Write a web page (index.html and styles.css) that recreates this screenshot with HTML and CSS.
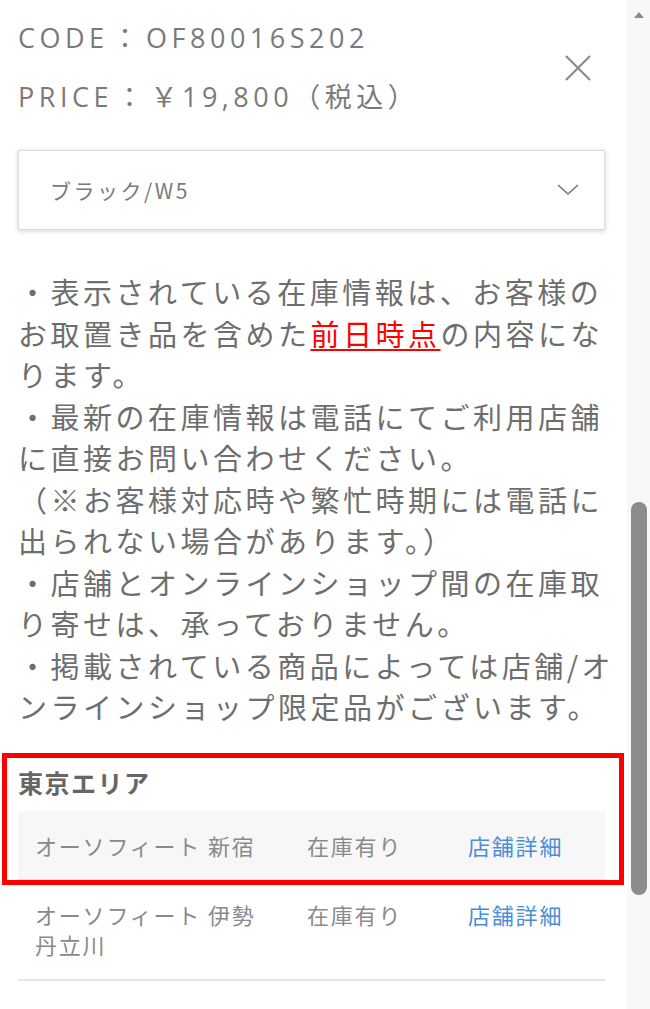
FILE: index.html
```html
<!DOCTYPE html>
<html lang="ja">
<head>
<meta charset="utf-8">
<link rel="stylesheet" href="styles.css">
</head>
<body>
<div class="window">
  <main class="content">
    <header class="head">
      <div class="meta">
        <p class="meta-line">CODE<span class="colon">：</span>OF80016S202</p>
        <p class="meta-line">PRICE<span class="colon">：</span>￥19,800（税込）</p>
      </div>
      <button class="close" aria-label="閉じる">
        <svg viewBox="0 0 26 26" width="26" height="26"><path d="M1 1L25 25M25 1L1 25" stroke="#8a8a8a" stroke-width="2.2" fill="none"/></svg>
      </button>
    </header>

    <div class="select">
      <span class="select-text">ブラック/W5</span>
      <svg class="chev" viewBox="0 0 22 12" width="22" height="12"><path d="M1 1L11 10L21 1" stroke="#777" stroke-width="1.6" fill="none"/></svg>
    </div>

    <div class="notes">
      <p>・表示されている在庫情報は、お客様のお取置き品を含めた<a class="red">前日時点</a>の内容になります。</p>
      <p>・最新の在庫情報は電話にてご利用店舗に直接お問い合わせください。</p>
      <p>（※お客様対応時や繁忙時期には電話に出られない場合があります。）</p>
      <p>・店舗とオンラインショップ間の在庫取り寄せは、承っておりません。</p>
      <p>・掲載されている商品によっては店舗/オンラインショップ限定品がございます。</p>
    </div>

    <section class="area">
      <div class="highlight">
        <h2 class="area-title">東京エリア</h2>
        <div class="row shaded">
          <span class="name">オーソフィート 新宿</span>
          <span class="stock">在庫有り</span>
          <a class="link">店舗詳細</a>
        </div>
      </div>
      <div class="row">
        <span class="name">オーソフィート 伊勢丹立川</span>
        <span class="stock">在庫有り</span>
        <a class="link">店舗詳細</a>
      </div>
    </section>
  </main>
  <aside class="scrollbar">
    <span class="arrow"></span>
    <span class="thumb"></span>
  </aside>
</div>
</body>
</html>
```

FILE: styles.css
```css
* { box-sizing: border-box; }
html, body { margin: 0; padding: 0; background: #fff; }
body {
  font-family: "Noto Sans CJK JP", "Noto Sans", sans-serif;
  color: #6e6e6e;
  height: 1009px;
  overflow: hidden;
}
.window {
  display: flex;
  height: 1009px;
}
.content {
  width: 627px;
  padding: 8px 22px 0 18px;
}
.head {
  display: flex;
  justify-content: space-between;
  align-items: center;
}
.meta-line {
  margin: 0;
  font-family: "Open Sans", "Noto Sans CJK JP", sans-serif;
  font-size: 27px;
  line-height: 59px;
  letter-spacing: 4.5px;
  color: #7a7a7a;
}
.colon {
  padding: 0 3px;
}
.close {
  border: 0;
  background: none;
  padding: 0;
  margin-right: 14px;
  margin-top: 2px;
  width: 26px;
  height: 26px;
  display: flex;
}
.select {
  margin-top: 24px;
  height: 80px;
  border: 1px solid #dcdcdc;
  box-shadow: 0 1px 5px rgba(0,0,0,0.18);
  display: flex;
  align-items: center;
  justify-content: space-between;
  padding: 0 25px 0 31px;
  background: #fff;
}
.select-text {
  font-size: 21px;
  letter-spacing: 2.5px;
  color: #7a7a7a;
}
.notes {
  margin-top: 41px;
  width: 610px;
}
.notes p {
  margin: 0;
  font-size: 29px;
  line-height: 41.5px;
  letter-spacing: 3.5px;
  color: #6e6e6e;
}
.red {
  color: #ff0000;
  text-decoration: underline;
  text-decoration-thickness: 2px;
  text-underline-offset: 3px;
}
.area {
  margin-top: 39px;
}
.highlight {
  position: relative;
}
.highlight::after {
  content: "";
  position: absolute;
  left: -16px;
  right: -19px;
  top: -14px;
  bottom: -4px;
  border: 5px solid #ff0000;
  pointer-events: none;
}
.area-title {
  margin: 0 0 14px;
  font-size: 25px;
  line-height: 30px;
  font-weight: 700;
  color: #666;
  letter-spacing: 1.5px;
}
.row {
  display: grid;
  grid-template-columns: 272px 161px 1fr;
  padding: 19px 0 19px 17px;
  border-bottom: 2px solid #e4e6e9;
  font-size: 22px;
  line-height: 30px;
  letter-spacing: 1.8px;
  color: #8a8a8a;
}
.shaded {
  background: #f7f7f7;
}
.row .name { padding-right: 38px; }
.link {
  color: #4a8fd6;
}
.row:not(.shaded) {
  padding-top: 18px;
  padding-bottom: 20px;
}
.scrollbar {
  width: 23px;
  background: #f8f8f8;
  display: flex;
  flex-direction: column;
  align-items: center;
}
.arrow {
  margin-top: 12px;
  width: 0;
  height: 0;
  border-left: 5px solid transparent;
  border-right: 5px solid transparent;
  border-bottom: 6px solid #8a8a8a;
}
.thumb {
  margin-top: 484px;
  width: 16px;
  height: 393px;
  border-radius: 8px;
  background: #8c8c8c;
}
```
